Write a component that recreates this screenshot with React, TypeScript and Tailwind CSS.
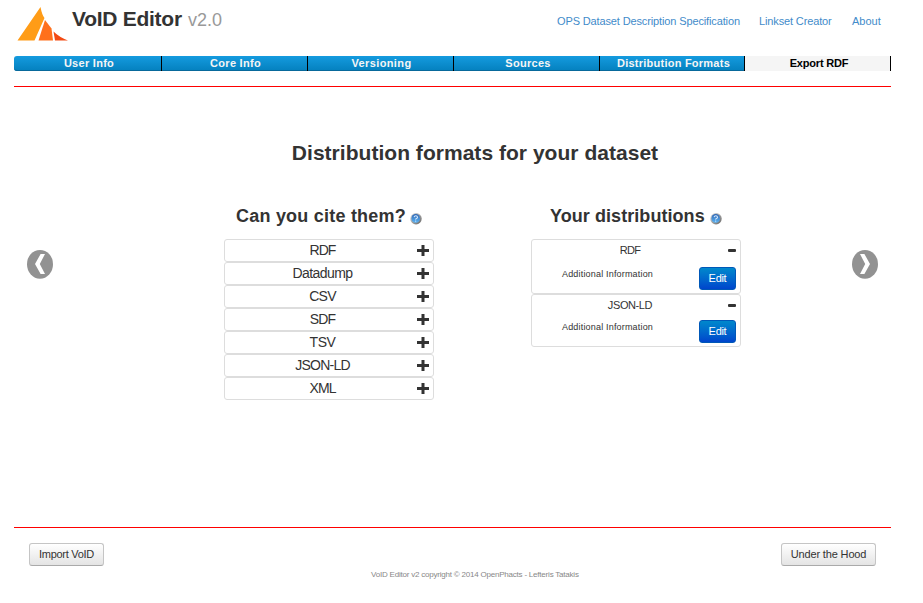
import React from "react";

const tabs = [
  { label: "User Info", box: "w-[148px] rounded-l-[3px] pl-[3px]", text: "tracking-[0.28px]" },
  { label: "Core Info", box: "w-[146px] pl-[2px]", text: "tracking-[0.28px]" },
  { label: "Versioning", box: "w-[146px] pl-[2px]", text: "tracking-[0.38px]" },
  { label: "Sources", box: "w-[146px] pl-[3px]", text: "tracking-[0.28px]" },
  { label: "Distribution Formats", box: "w-[145px] pl-[3px]", text: "tracking-[0.24px]" },
];

const formats = [
  { label: "RDF", text: "tracking-[-0.9px]" },
  { label: "Datadump", text: "tracking-[-0.6px]" },
  { label: "CSV", text: "tracking-[-0.7px]" },
  { label: "SDF", text: "tracking-[-0.8px]" },
  { label: "TSV", text: "tracking-[-0.4px]" },
  { label: "JSON-LD", text: "tracking-[-0.75px]" },
  { label: "XML", text: "tracking-[-0.9px]" },
];

const chosen = [
  { label: "RDF", box: "h-[55px]", gap: "mt-[6px]", text: "tracking-[-0.7px]" },
  { label: "JSON-LD", box: "h-[53px]", gap: "mt-[4px]", text: "tracking-[-0.4px]" },
];

function Logo() {
  return (
    <svg className="mt-[6px] ml-[3px] h-[36px] w-[52px] shrink-0" viewBox="0 0 52 36">
      <path d="M23.5 1Q25 9 27.5 12L17.5 34.5H.5Z" fill="#ff9c17" />
      <path d="M28 14 34.5 22.5 36 34.5H21.5Z" fill="#ff701c" />
      <path d="M36.5 25.5Q42 31 51 34.5H38Z" fill="#f34a13" />
    </svg>
  );
}

function Help() {
  return (
    <svg className="h-[12px] w-[12px] shrink-0" viewBox="0 0 12 12">
      <defs>
        <linearGradient id="orb" x1="0" y1="0" x2="0" y2="1">
          <stop offset="0" stopColor="#2f66b4" />
          <stop offset="1" stopColor="#5cb4f4" />
        </linearGradient>
        <linearGradient id="rim" x1="0" y1="0" x2="1" y2="1">
          <stop offset="0" stopColor="#e4e4e4" />
          <stop offset="1" stopColor="#606060" />
        </linearGradient>
      </defs>
      <circle cx="6" cy="5.8" r="5.7" fill="url(#rim)" />
      <circle cx="5.7" cy="5.4" r="4.3" fill="url(#orb)" />
      <path d="M4.1 4.2Q4.4 2.8 5.8 2.8T7.5 4.2Q7.5 5 6.5 5.5T5.7 6.6" fill="none" stroke="#d5e8fb" strokeWidth="1.1" />
      <circle cx="5.7" cy="8.1" r=".6" fill="#e8f4ff" />
    </svg>
  );
}

function Arrow({ right = false }: { right?: boolean }) {
  return (
    <svg className="h-[30px] w-[26px] shrink-0" viewBox="0 0 26 30">
      <ellipse cx="13" cy="15.3" rx="13" ry="14.4" fill="#929292" />
      <path
        d={right ? "M8 5H12.4L18 15 12.4 25H8L13.2 15Z" : "M18 5H13.6L8 15 13.6 25H18L12.8 15Z"}
        fill="#fff"
      />
    </svg>
  );
}

function Plus() {
  return (
    <svg className="h-[11px] w-[12px]" viewBox="0 0 12 11">
      <path d="M4.5 0H7.5V4H12V7H7.5V11H4.5V7H0V4H4.5Z" fill="#333" />
    </svg>
  );
}

const plainButton =
  "h-[23px] rounded-[3px] border border-[#c5c5c5] border-b-[#aaa] bg-linear-to-b from-white to-[#e4e4e4] text-[11px] leading-[21px] text-[#333] whitespace-nowrap";

export default function App() {
  return (
    <div className="h-[603px] w-[923px] overflow-hidden bg-white pl-[14px] font-['Liberation_Sans',Arial,sans-serif] text-[#333]">
      <div className="w-[877px]">
        <header className="flex h-[56px] items-start">
          <Logo />
          <h1 className="ml-[3px] mt-[5px] w-[111px] text-[21px] leading-[28px] font-bold tracking-[-0.27px] whitespace-nowrap">
            VoID Editor
          </h1>
          <span className="ml-[5px] mt-[6px] text-[18px] leading-[28px] text-[#999]">v2.0</span>
          <nav className="ml-auto mr-[10px] mt-[14px] flex text-[11px] leading-[15px] whitespace-nowrap text-[#428bca]">
            <a className="w-[202px] tracking-[-0.13px]">OPS Dataset Description Specification</a>
            <a className="w-[93px] tracking-[-0.13px]">Linkset Creator</a>
            <a className="w-[29px]">About</a>
          </nav>
        </header>
        <nav className="flex h-[15px] text-center text-[11px] leading-[15px] font-bold whitespace-nowrap">
          {tabs.map((t) => (
            <a
              key={t.label}
              className={`${t.box} ${t.text} border-r border-r-black bg-linear-to-b from-[#149bdf] to-[#0480be] text-[#f5f5f5] shadow-[inset_0_-1px_0_#08699b]`}
            >
              {t.label}
            </a>
          ))}
          <a className="w-[146px] border-r border-black bg-[#f5f5f5] pl-[3px] tracking-[-0.18px] text-black">Export RDF</a>
        </nav>
        <hr className="mt-[15px] border-0 border-t border-[#f00]" />
        <main className="flex h-[440px] items-start pr-[13px] pl-[13px]">
          <div className="mt-[162px]">
            <Arrow />
          </div>
          <div className="ml-[171px] w-[517px]">
            <h2 className="mt-[51px] ml-[-15px] flex h-[30px] justify-center text-[21px] leading-[30px] font-bold tracking-[0.03px] whitespace-nowrap">
              Distribution formats for your dataset
            </h2>
            <div className="mt-[35px] flex justify-between">
              <section className="w-[210px]">
                <h3 className="flex h-[36px] items-start pl-[12px] text-[18px] leading-[26px] font-bold whitespace-nowrap">
                  <span className="w-[174px] tracking-[0.22px]">Can you cite them?</span>
                  <span className="mt-[10px]">
                    <Help />
                  </span>
                </h3>
                {formats.map((f) => (
                  <div
                    key={f.label}
                    className="flex h-[23px] items-center justify-between rounded-[3px] border border-[#ddd] pr-[4px] pl-[20px] text-[14px] leading-[21px]"
                  >
                    <span className={`w-[155px] text-center ${f.text}`}>{f.label}</span>
                    <Plus />
                  </div>
                ))}
              </section>
              <section className="w-[210px]">
                <h3 className="flex h-[36px] items-start pl-[19px] text-[18px] leading-[26px] font-bold whitespace-nowrap">
                  <span className="w-[160px] tracking-[0.06px]">Your distributions</span>
                  <span className="mt-[10px]">
                    <Help />
                  </span>
                </h3>
                {chosen.map((c) => (
                  <div key={c.label} className={`${c.box} rounded-[3px] border border-[#ddd] pr-[4px] pl-[20px]`}>
                    <div className="flex h-[21px] items-center justify-between text-[11px]">
                      <span className={`w-[156px] pb-[2px] text-center leading-[18px] ${c.text}`}>{c.label}</span>
                      <span className="h-[3px] w-[8px] rounded-[1px] bg-[#333]" />
                    </div>
                    <div className={`${c.gap} flex items-start justify-between pl-[10px]`}>
                      <span className="text-[9px] leading-[14px] tracking-[0.18px] whitespace-nowrap">Additional Information</span>
                      <button className="h-[23px] w-[37px] rounded-[3px] border border-[#0058b8] bg-linear-to-b from-[#0088cc] to-[#0044cc] text-[11px] leading-[21px] tracking-[-0.3px] text-white">
                        Edit
                      </button>
                    </div>
                  </div>
                ))}
              </section>
            </div>
          </div>
          <div className="mt-[162px] ml-auto">
            <Arrow right />
          </div>
        </main>
        <hr className="border-0 border-t border-[#f00]" />
        <footer>
          <div className="mt-[15px] flex justify-between pr-[15px] pl-[15px]">
            <button className={`${plainButton} w-[75px] tracking-[-0.28px]`}>Import VoID</button>
            <button className={`${plainButton} w-[95px] tracking-[-0.15px]`}>Under the Hood</button>
          </div>
          <p className="mt-[3px] ml-[357px] text-[8px] leading-[12px] tracking-[-0.21px] whitespace-nowrap text-[#888]">
            VoID Editor v2 copyright © 2014 OpenPhacts - Lefteris Tatakis
          </p>
        </footer>
      </div>
    </div>
  );
}
